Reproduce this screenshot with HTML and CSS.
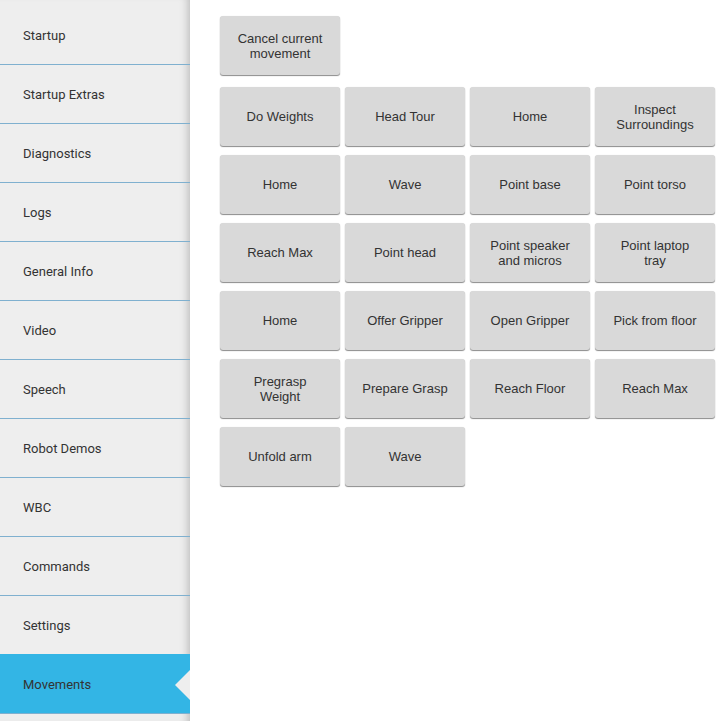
FILE: index.html
```html
<!DOCTYPE html>
<html>
<head>
<meta charset="utf-8">
<link rel="stylesheet" href="styles.css">
</head>
<body>
<div class="app">
  <nav class="sidebar">
    <div class="nav-item">Startup</div>
    <div class="nav-item">Startup Extras</div>
    <div class="nav-item">Diagnostics</div>
    <div class="nav-item">Logs</div>
    <div class="nav-item">General Info</div>
    <div class="nav-item">Video</div>
    <div class="nav-item">Speech</div>
    <div class="nav-item">Robot Demos</div>
    <div class="nav-item">WBC</div>
    <div class="nav-item">Commands</div>
    <div class="nav-item">Settings</div>
    <div class="nav-item active">Movements<span class="pointer"></span></div>
    <div class="nav-item"></div>
  </nav>
  <main class="content">
    <div class="top-row">
      <button class="btn">Cancel current movement</button>
    </div>
    <div class="grid">
      <button class="btn">Do Weights</button>
      <button class="btn">Head Tour</button>
      <button class="btn">Home</button>
      <button class="btn">Inspect Surroundings</button>
      <button class="btn">Home</button>
      <button class="btn">Wave</button>
      <button class="btn">Point base</button>
      <button class="btn">Point torso</button>
      <button class="btn">Reach Max</button>
      <button class="btn">Point head</button>
      <button class="btn">Point speaker and micros</button>
      <button class="btn">Point laptop tray</button>
      <button class="btn">Home</button>
      <button class="btn">Offer Gripper</button>
      <button class="btn">Open Gripper</button>
      <button class="btn">Pick from floor</button>
      <button class="btn">Pregrasp Weight</button>
      <button class="btn">Prepare Grasp</button>
      <button class="btn">Reach Floor</button>
      <button class="btn">Reach Max</button>
      <button class="btn">Unfold arm</button>
      <button class="btn">Wave</button>
    </div>
  </main>
</div>
</body>
</html>
```
FILE: styles.css
```css
html, body {
  margin: 0;
  padding: 0;
  height: 100%;
  overflow: hidden;
  background: #ffffff;
}
.app {
  display: flex;
  height: 721px;
}
.sidebar {
  width: 190px;
  flex: 0 0 190px;
  background: #eeeeee;
  box-shadow: inset -9px 0 8px -7px rgba(0, 0, 0, 0.22);
  padding-top: 6px;
  box-sizing: border-box;
  overflow: hidden;
  font-family: Roboto, "Liberation Sans", sans-serif;
  font-size: 13px;
  color: #333333;
}
.nav-item {
  position: relative;
  height: 57px;
  padding-top: 1px;
  line-height: 58px;
  padding-left: 23px;
  border-bottom: 1px solid #7fb0cf;
}
.nav-item.active {
  background: #33b5e5;
  border-top: 1px solid #33b5e5;
  margin-top: -1px;
  border-bottom-color: #7fb0cf;
}
.pointer {
  position: absolute;
  right: 0;
  top: 15px;
  width: 0;
  height: 0;
  border-top: 15px solid transparent;
  border-bottom: 15px solid transparent;
  border-right: 15px solid #eeeeee;
}
.content {
  flex: 1;
  padding: 16px 0 0 30px;
  font-family: "Liberation Sans", Arial, sans-serif;
}
.top-row {
  display: flex;
  margin-bottom: 12px;
}
.grid {
  display: grid;
  grid-template-columns: repeat(4, 120px);
  column-gap: 5px;
  row-gap: 9px;
}
.btn {
  width: 120px;
  height: 59px;
  padding: 0 14px;
  border: none;
  border-radius: 3px;
  background: #d9d9d9;
  color: #333333;
  font-family: "Liberation Sans", Arial, sans-serif;
  font-size: 13px;
  line-height: 15px;
  text-align: center;
  box-shadow: 0 1px 1px rgba(0, 0, 0, 0.45), 0 0 1px rgba(0, 0, 0, 0.12);
  cursor: pointer;
}
```
